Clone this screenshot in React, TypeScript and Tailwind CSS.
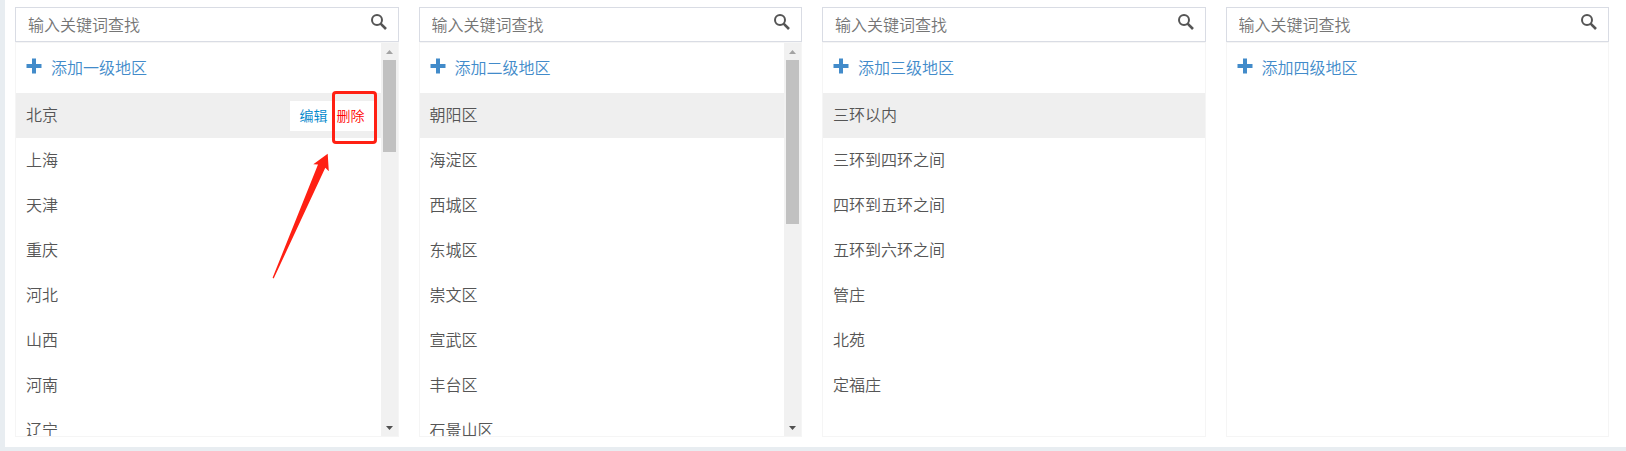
import React, { useState } from "react";

type Level = {
  name: string;
  items: string[];
  thumb?: string;
};

const levels: Level[] = [
  {
    name: "一级",
    items: ["北京", "上海", "天津", "重庆", "河北", "山西", "河南", "辽宁"],
    thumb: "h-[92px]",
  },
  {
    name: "二级",
    items: ["朝阳区", "海淀区", "西城区", "东城区", "崇文区", "宣武区", "丰台区", "石景山区"],
    thumb: "h-[164px]",
  },
  {
    name: "三级",
    items: ["三环以内", "三环到四环之间", "四环到五环之间", "五环到六环之间", "管庄", "北苑", "定福庄"],
  },
  { name: "四级", items: [] },
];

const SearchIcon: React.FC = () => (
  <svg className="w-4 h-4" viewBox="0 0 16 16" fill="none" stroke="#555" aria-hidden="true">
    <circle cx="6" cy="6" r="5" strokeWidth="2" />
    <path d="M9.6 9.6 L15 15" strokeWidth="2.6" />
  </svg>
);

const PlusIcon: React.FC = () => (
  <svg className="w-4 h-4" viewBox="0 0 16 16" fill="#428bca" aria-hidden="true">
    <path d="M6 0.5h4v5.5h5.5v4H10v5.5H6V10H0.5V6H6z" />
  </svg>
);

// red frame round the delete button, with the arrow that points at it
const DeleteMark: React.FC = () => (
  <span className="pointer-events-none">
    <span className="absolute -left-[5px] -top-2.5 z-10 w-[45px] h-[53px] rounded border-3 border-[#ff2013]" />
    <svg className="absolute -left-[65px] top-[52px] z-10 w-[58px] h-[127px]" viewBox="0 0 58 127" fill="#ff2013">
      <path d="M55.7 0.7 L41.3 11.3 L46 11.5 L0.6 124.8 L1.7 125.6 L53.3 14.7 L56.8 18.2 Z" />
    </svg>
  </span>
);

const ScrollBar: React.FC<{ thumb: string }> = ({ thumb }) => (
  <div className="w-[17px] shrink-0 bg-[#f1f1f1] flex flex-col items-center" aria-hidden="true">
    <div className="h-[17px] flex items-center">
      <svg className="w-[7px] h-1" viewBox="0 0 7 4" fill="#a3a3a3">
        <path d="M3.5 0L7 4H0z" />
      </svg>
    </div>
    <div className={`w-[13px] bg-[#c1c1c1] ${thumb}`} />
    <div className="h-[17px] mt-auto flex items-center">
      <svg className="w-[7px] h-1" viewBox="0 0 7 4" fill="#505050">
        <path d="M3.5 4L7 0H0z" />
      </svg>
    </div>
  </div>
);

const Column: React.FC<{ level: Level; first: boolean }> = ({ level, first }) => {
  const [keyword, setKeyword] = useState<string>("");
  const [active, setActive] = useState<number>(0);

  return (
    <section className="flex-1 min-w-0">
      <div className="h-[35px] flex items-start border border-[#d9dce4] pr-[11px]">
        <input
          type="text"
          aria-label={`查找${level.name}地区`}
          placeholder="输入关键词查找"
          value={keyword}
          onChange={(e) => setKeyword(e.target.value)}
          className="flex-1 min-w-0 h-full pl-3 pb-0.5 outline-none placeholder:text-[#757575]"
        />
        <button type="button" aria-label="查找" className="mt-1.5">
          <SearchIcon />
        </button>
      </div>
      <div className="h-[395px] flex border border-[#f5f5f5]">
        <div className="flex-1 min-w-0 overflow-y-auto [scrollbar-width:none]">
          <button type="button" className="h-[50px] pb-1 px-2.5 flex items-center gap-[9px] text-[#428bca]">
            <PlusIcon />
            <span className="pt-px">添加{level.name}地区</span>
          </button>
          <ul>
            {level.items.map((item, i) => (
              <li
                key={item}
                onClick={() => setActive(i)}
                className={`h-[45px] pl-2.5 pr-1.5 flex items-center justify-between ${i === active ? "bg-[#efefef]" : ""}`}
              >
                <span className="pb-[3px]">{item}</span>
                {first && i === active && (
                  <span className="h-[30px] px-2.5 flex items-center gap-[9px] bg-white text-sm">
                    <button type="button" className="pb-0.5 text-[#0088cc]">编辑</button>
                    <span className="relative h-full flex items-center">
                      <button type="button" className="pb-0.5 text-[#ff0000]">删除</button>
                      <DeleteMark />
                    </span>
                  </span>
                )}
              </li>
            ))}
          </ul>
        </div>
        {level.thumb && <ScrollBar thumb={level.thumb} />}
      </div>
    </section>
  );
};

const App: React.FC = () => {
  return (
    <div className="border-l-5 border-b-4 border-[#e8edf1] bg-white pt-[7px] pb-2.5 pl-2.5 pr-[17px] flex gap-5 text-base font-[350] text-[#555] font-['Noto_Sans_CJK_SC',sans-serif]">
      {levels.map((level, i) => (
        <Column key={level.name} level={level} first={i === 0} />
      ))}
    </div>
  );
};

export default App;
